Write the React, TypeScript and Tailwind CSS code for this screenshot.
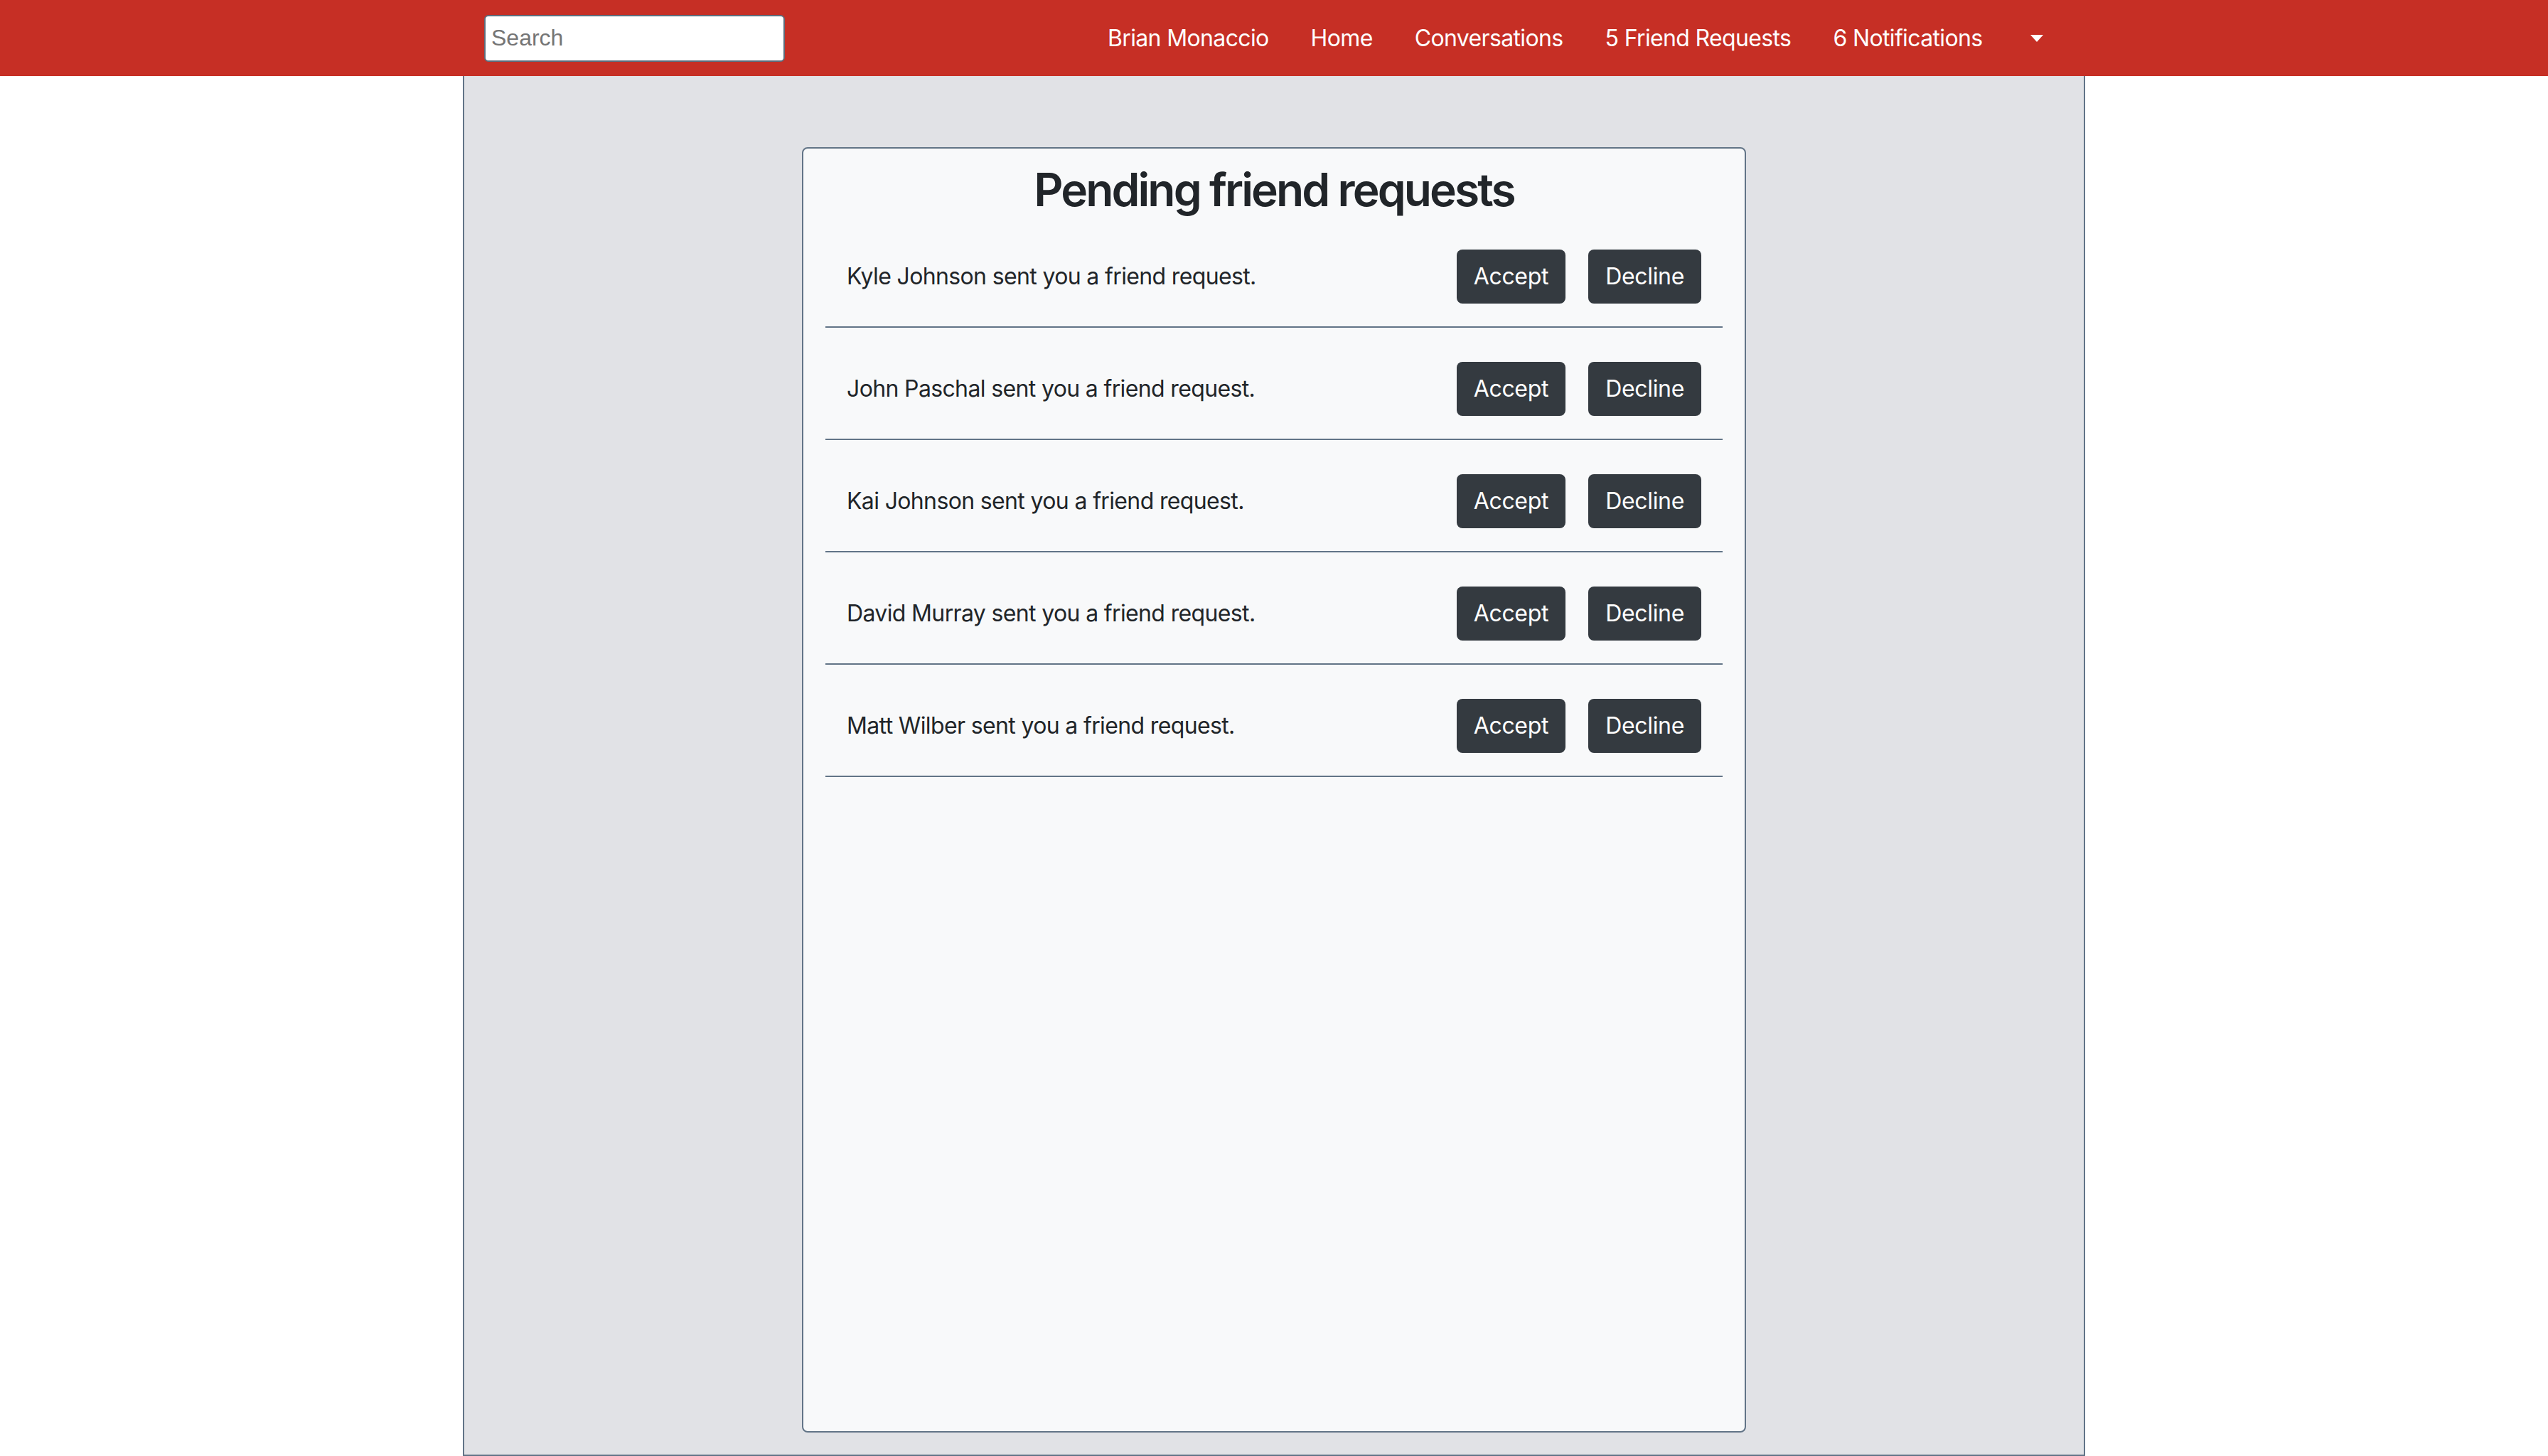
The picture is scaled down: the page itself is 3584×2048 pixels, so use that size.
import React from 'react'

const requests = ['Kyle Johnson', 'John Paschal', 'Kai Johnson', 'David Murray', 'Matt Wilber']
const links = ['Brian Monaccio', 'Home', 'Conversations', '5 Friend Requests', '6 Notifications']

function Navbar() {
  return (
    <div className="h-[107px] bg-[#c62f25] flex justify-center">
      <div className="w-[2282px] px-[30px] flex items-center">
        <input
          placeholder="Search"
          className="w-[423px] h-[66px] bg-white border-2 border-[#5d6c7c] rounded-[6px] px-[8px] text-[32px] font-['Liberation_Sans',sans-serif] placeholder:text-[#757575] outline-none"
        />
        <div className="ml-auto flex items-center text-[32px] tracking-[-0.02em] text-white">
          {links.map((l) => (
            <a key={l} className="px-[29.5px] leading-[48px] cursor-pointer">{l}</a>
          ))}
          <a className="px-[29.5px] h-[48px] flex items-center">
            <span className="ml-[8px] w-0 h-0 border-t-[10px] border-t-white border-x-[9px] border-x-transparent" />
          </a>
        </div>
      </div>
    </div>
  )
}

function RequestRow({ name }: { name: string }) {
  return (
    <div className="pt-[48px]">
      <div className="flex items-center justify-between px-[30px]">
        <span className="text-[32px] tracking-[-0.02em] text-[#212529]">{name} sent you a friend request.</span>
        <div className="flex gap-[32px]">
          <button className="h-[76px] px-[24px] rounded-[8px] bg-[#343a40] text-white text-[32px] tracking-[-0.01em]">Accept</button>
          <button className="h-[76px] px-[24px] rounded-[8px] bg-[#343a40] text-white text-[32px] tracking-[-0.01em]">Decline</button>
        </div>
      </div>
      <div className="mt-[32px] h-[2px] bg-[#627487]" />
    </div>
  )
}

export default function App() {
  return (
    <div className="min-h-[2048px] bg-white font-['Inter',sans-serif]">
      <Navbar />
      <div className="mx-auto w-[2282px] h-[1941px] bg-[#e1e2e6] border-x-2 border-b-2 border-[#627487] pt-[100px] pb-[31px] flex justify-center">
        <div className="w-[1328px] h-full bg-[#f8f9fa] border-2 border-[#627487] rounded-[8px] px-[31px] pt-[21px]">
          <h2 className="text-center text-[64px] leading-[73px] font-semibold tracking-[-0.045em] text-[#212529]">Pending friend requests</h2>
          {requests.map((n) => (
            <RequestRow key={n} name={n} />
          ))}
        </div>
      </div>
    </div>
  )
}
